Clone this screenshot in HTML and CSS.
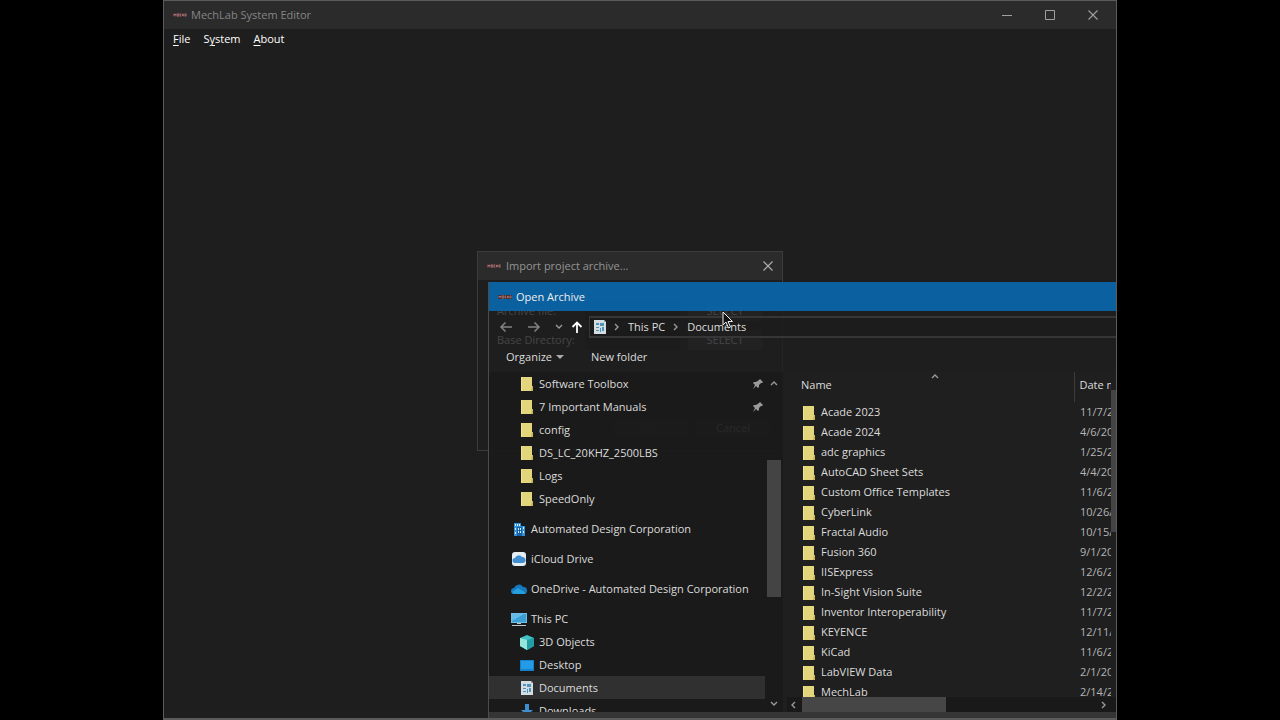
FILE: index.html
```html
<!DOCTYPE html>
<html lang="en">
<head>
<meta charset="utf-8">
<title>MechLab System Editor</title>
<link rel="stylesheet" href="styles.css">
</head>
<body>
<svg class="defs" aria-hidden="true">
  <defs>
    <symbol id="folder" viewBox="0 0 14 16"><path d="M1 1h11v9h1v5H1z" fill="#e3d57b"/><path d="M1 1h1v14H1z" fill="#f0e49a"/><path d="M11 15l1-5h1v5z" fill="#c9b654"/></symbol>
    <symbol id="logo" viewBox="0 0 14 6"><path d="M0 1h14v4H0z" fill="#4a3032"/><path d="M1 4V2l1 1 1-1v2M4 2h2M4 3h2M4 4h2M8 2H7v2h1M9.500 2v2M11 2v2M9.500 3H11M12 2h1v2h-1" fill="none" stroke="#b98789" stroke-width=".7"/></symbol>
    <symbol id="close" viewBox="0 0 12 12"><path d="M1.500 1.500l9 9M10.500 1.500l-9 9" fill="none" stroke="currentColor" stroke-width="1.100"/></symbol>
    <symbol id="doc" viewBox="0 0 12 14"><path d="M0 0h10l2 2v12H0z" fill="#d3dde2"/><path d="M10 0v2h2z" fill="#8e9ba2"/><path d="M2 3h3v2H2zM6 3h4v3H6zM2 7h3v1H2zM2 10h3v1H2zM6 8h1v4H6zM8 7h2v4H8z" fill="#4f93bb"/></symbol>
    <symbol id="up" viewBox="0 0 8 6"><path d="M1 5l3-3 3 3" fill="none" stroke="currentColor" stroke-width="1.400"/></symbol>
    <symbol id="pin" viewBox="0 0 12 12"><path d="M8 1l3 3-1 1-1 0-2 2 0 2-1 1-2-2L1 11l2-4-2-2 1-1h2l3-2z" fill="#9a9a9a"/></symbol>
  </defs>
</svg>
<div class="screen">
<div class="app">
  <header class="titlebar">
    <svg class="logo"><use href="#logo"/></svg>
    <h1 class="title">MechLab System Editor</h1>
    <div class="controls">
      <button class="control" aria-label="Minimize"><svg viewBox="0 0 12 12"><path d="M1 6.500h10" stroke="currentColor"/></svg></button>
      <button class="control" aria-label="Maximize"><svg viewBox="0 0 12 12"><path d="M1.500 1.500h9v9h-9z" fill="none" stroke="currentColor"/></svg></button>
      <button class="control" aria-label="Close"><svg><use href="#close"/></svg></button>
    </div>
  </header>
  <nav class="menubar">
    <button class="menu"><u>F</u>ile</button>
    <button class="menu">S<u>y</u>stem</button>
    <button class="menu"><u>A</u>bout</button>
  </nav>

  <section class="import" aria-label="Import project archive">
    <header class="import-title">
      <svg class="logo"><use href="#logo"/></svg>
      <h2 class="title">Import project archive...</h2>
      <button class="import-close" aria-label="Close"><svg><use href="#close"/></svg></button>
    </header>
    <form class="import-form">
      <div class="field"><label for="archive">Archive file:</label><input id="archive" type="text"><button type="button">SELECT</button></div>
      <div class="field"><label for="base">Base Directory:</label><input id="base" type="text"><button type="button">SELECT</button></div>
      <div class="actions"><button type="button" disabled>OK</button><button type="button">Cancel</button></div>
    </form>
  </section>

  <section class="open" aria-label="Open Archive">
    <header class="open-title"><svg class="logo"><use href="#logo"/></svg><h2 class="title">Open Archive</h2></header>
    <div class="navrow">
      <button class="nav dim" aria-label="Back"><svg viewBox="0 0 14 12"><path d="M13 6H2M6.500 1.500L2 6l4.500 4.500" fill="none" stroke="currentColor" stroke-width="1.500"/></svg></button>
      <button class="nav dim" aria-label="Forward"><svg viewBox="0 0 14 12"><path d="M1 6h11M7.500 1.500L12 6l-4.500 4.500" fill="none" stroke="currentColor" stroke-width="1.500"/></svg></button>
      <button class="nav recent" aria-label="Recent locations"><svg class="caret flip"><use href="#up"/></svg></button>
      <button class="nav parent" aria-label="Up"><svg viewBox="0 0 14 12"><path d="M7 12V1.500M2.500 6L7 1.500 11.500 6" fill="none" stroke="currentColor" stroke-width="1.800"/></svg></button>
      <div class="address">
        <svg class="doc"><use href="#doc"/></svg>
        <svg class="caret right"><use href="#up"/></svg>
        <a href="#pc">This PC</a>
        <svg class="caret right"><use href="#up"/></svg>
        <a href="#documents">Documents</a>
      </div>
    </div>
    <div class="commands">
      <button>Organize <svg class="drop" viewBox="0 0 8 4"><path d="M0 0h8L4 4z" fill="currentColor"/></svg></button>
      <button>New folder</button>
    </div>
    <div class="content">
      <nav class="tree">
        <ul>
          <li class="child"><svg><use href="#folder"/></svg>Software Toolbox<svg class="pin"><use href="#pin"/></svg></li>
          <li class="child"><svg><use href="#folder"/></svg>7 Important Manuals<svg class="pin"><use href="#pin"/></svg></li>
          <li class="child"><svg><use href="#folder"/></svg>config</li>
          <li class="child"><svg><use href="#folder"/></svg>DS_LC_20KHZ_2500LBS</li>
          <li class="child"><svg><use href="#folder"/></svg>Logs</li>
          <li class="child"><svg><use href="#folder"/></svg>SpeedOnly</li>
          <li class="root"><svg viewBox="0 0 16 16"><path d="M3 2h7v3h4v10h-3V6H6v9H3z" fill="#2f8fd8"/><path d="M6 6h5v9H6z" fill="#1660a5"/><path d="M4 3h1v2H4zM6 3h1v2H6zM8 3h1v2H8zM4 7h1v2H4zM4 11h1v2H4zM7 7h1v2H7zM9 7h1v2H9zM7 10h1v2H7zM9 10h1v2H9zM12 6h1v2h-1zM12 10h1v2h-1z" fill="#d5ecfb"/></svg>Automated Design Corporation</li>
          <li class="root"><svg viewBox="0 0 16 16"><rect x="1" y="1" width="14" height="14" rx="3" fill="#e6eef4"/><path d="M4 12a2.500 2.500 0 0 1 0-5 4 4 0 0 1 7-1 3 3 0 0 1 1 6z" fill="#3f8ed0"/></svg>iCloud Drive</li>
          <li class="root"><svg viewBox="0 0 16 16"><path d="M3 13a3 3 0 0 1 0-6 5 5 0 0 1 9-1 3.500 3.500 0 0 1 1 7z" fill="#1679bd"/><path d="M1 11l6-4 8 5q-1 1-2 1H3q-1.500 0-2-2z" fill="#23a0dd"/></svg>OneDrive - Automated Design Corporation</li>
          <li class="root"><svg viewBox="0 0 16 16"><path d="M0 2h16v10H0z" fill="#70bbe5"/><path d="M1 3h14v8H1z" fill="#3b9fd5"/><path d="M1 3h12L1 10z" fill="#64b9e5"/><path d="M6 12h4v1H6zM1 14h14v1H1z" fill="#b8c6ce"/></svg>This PC</li>
          <li class="child"><svg viewBox="0 0 16 16"><path d="M1 4l7-3 7 3v8l-7 4-7-4z" fill="#41c2c4"/><path d="M1 4l7 2v10l-7-4z" fill="#95e5dc"/><path d="M8 6l7-2v8l-7 4z" fill="#229da6"/></svg>3D Objects</li>
          <li class="child"><svg viewBox="0 0 16 16"><path d="M1 3h14v11H1z" fill="#1682cd"/><path d="M2 4h12v8H2z" fill="#249ce5"/></svg>Desktop</li>
          <li class="child selected"><svg viewBox="0 0 16 16"><use href="#doc" x="2" y="1" width="12" height="14"/></svg>Documents</li>
          <li class="child"><svg viewBox="0 0 16 16"><path d="M6 1h4v6h4l-6 6-6-6h4zM2 13h12v1H2z" fill="#3e8fcf"/></svg>Downloads</li>
        </ul>
      </nav>
      <div class="treescroll">
        <svg class="caret"><use href="#up"/></svg>
        <div class="track"><div class="thumb"></div></div>
        <svg class="caret flip"><use href="#up"/></svg>
      </div>
      <div class="files">
        <div class="filemain">
          <div class="viewport">
            <table>
              <thead><tr><th class="name">Name<svg class="caret sort"><use href="#up"/></svg></th><th class="date">Date modified</th></tr></thead>
              <tbody>
                <tr><td><svg><use href="#folder"/></svg>Acade 2023</td><td>11/7/2023</td></tr>
                <tr><td><svg><use href="#folder"/></svg>Acade 2024</td><td>4/6/2023</td></tr>
                <tr><td><svg><use href="#folder"/></svg>adc graphics</td><td>1/25/2023</td></tr>
                <tr><td><svg><use href="#folder"/></svg>AutoCAD Sheet Sets</td><td>4/4/2023</td></tr>
                <tr><td><svg><use href="#folder"/></svg>Custom Office Templates</td><td>11/6/2023</td></tr>
                <tr><td><svg><use href="#folder"/></svg>CyberLink</td><td>10/26/2023</td></tr>
                <tr><td><svg><use href="#folder"/></svg>Fractal Audio</td><td>10/15/2023</td></tr>
                <tr><td><svg><use href="#folder"/></svg>Fusion 360</td><td>9/1/2023</td></tr>
                <tr><td><svg><use href="#folder"/></svg>IISExpress</td><td>12/6/2023</td></tr>
                <tr><td><svg><use href="#folder"/></svg>In-Sight Vision Suite</td><td>12/2/2023</td></tr>
                <tr><td><svg><use href="#folder"/></svg>Inventor Interoperability</td><td>11/7/2023</td></tr>
                <tr><td><svg><use href="#folder"/></svg>KEYENCE</td><td>12/11/2023</td></tr>
                <tr><td><svg><use href="#folder"/></svg>KiCad</td><td>11/6/2023</td></tr>
                <tr><td><svg><use href="#folder"/></svg>LabVIEW Data</td><td>2/1/2023</td></tr>
                <tr><td><svg><use href="#folder"/></svg>MechLab</td><td>2/14/2023</td></tr>
              </tbody>
            </table>
          </div>
          <div class="vscroll"><div class="thumb"></div></div>
        </div>
        <div class="hscroll">
          <svg class="caret left"><use href="#up"/></svg>
          <div class="track"><div class="thumb"></div></div>
          <svg class="caret right"><use href="#up"/></svg>
        </div>
      </div>
    </div>
    <footer class="open-foot"></footer>
  </section>
  <svg class="cursor" viewBox="0 0 12 18"><path d="M1 1v13l3-3 2.500 6 2-1L6 10.500h4.500z" fill="#111" stroke="#eee"/></svg>
</div>
</div>
</body>
</html>
```

FILE: styles.css
```css
* { box-sizing: border-box; }
body {
  margin: 0;
  background: #000;
  color: #dcdcdc;
  font: 11px/20px "Open Sans", "Noto Sans", sans-serif;
}
button, input { font: inherit; color: inherit; border: 0; padding: 0; background: none; }
h1, h2 { margin: 0; font-weight: 400; }
a { color: inherit; text-decoration: none; }
svg { display: block; flex: none; }
.defs { position: absolute; width: 0; height: 0; }
.screen { padding: 0 163px; }
.app {
  position: relative;
  display: flex;
  flex-direction: column;
  height: 100vh;
  overflow: hidden;
  background: #1e1e1e;
  border: 1px solid #5b5b5b;
  border-bottom-width: 2px;
}
.logo { width: 14px; height: 6px; }
.title { font-size: 11px; }

.titlebar {
  display: flex;
  align-items: center;
  gap: 4px;
  height: 28px;
  padding: 0 2px 0 9px;
  background: #2b2b2b;
  color: #858585;
}
.controls { display: flex; margin-left: auto; }
.control { display: grid; place-items: center; width: 43px; height: 28px; color: #a0a0a0; }
.control svg, .import-close svg { width: 12px; height: 12px; }
.menubar { display: flex; gap: 13px; padding: 0 9px; color: #fff; }
.menu u { text-underline-offset: 2px; }

.import {
  position: absolute;
  left: 313px;
  top: 250px;
  width: 306px;
  height: 200px;
  border: 1px solid #3c3c3c;
  background: #1e1e1e;
}
.import-title {
  display: flex;
  align-items: center;
  gap: 5px;
  height: 28px;
  padding: 0 8px 0 9px;
  background: #2b2b2b;
  color: #949494;
}
.import-close { margin-left: auto; color: #b0b0b0; }
.import-form { padding: 16px 12px 12px 19px; }
.field { display: flex; align-items: center; height: 29px; }
.field label { width: 88px; }
.field input { width: 95px; height: 20px; background: #151515; }
.field button, .actions button { width: 74px; height: 20px; background: #333; }
.field button { margin-left: 8px; }
.actions { display: flex; justify-content: flex-end; gap: 8px; padding-top: 64px; }
.actions button:disabled { color: #404040; }

.open {
  position: absolute;
  left: 324px;
  right: 0;
  top: 281px;
  bottom: 0;
  display: flex;
  flex-direction: column;
  border-left: 1px solid #4c4c4c;
  background: rgba(30, 30, 30, .8);
}
.open-title {
  display: flex;
  align-items: center;
  gap: 4px;
  height: 29px;
  padding-left: 9px;
  background: rgba(9, 103, 173, .9);
  color: #eee;
}
.navrow { display: flex; align-items: center; height: 32px; padding-left: 10px; }
.nav { width: 28px; color: #fff; }
.nav svg { width: 14px; height: 12px; }
.nav.dim { color: #828282; }
.nav.recent { width: 15px; color: #828282; }
.nav.parent { width: 19px; }
.caret, .nav .caret { width: 8px; height: 6px; color: #999; }
.flip { transform: rotate(180deg); }
.right { transform: rotate(90deg); }
.left { transform: rotate(-90deg); }
.address {
  flex: 1;
  display: flex;
  align-items: center;
  gap: 7px;
  height: 22px;
  padding-left: 4px;
  border: 2px solid #363636;
  border-width: 2px 0 2px 1px;
  background: rgba(25, 25, 25, .4);
}
.doc { width: 12px; height: 14px; }
.commands { display: flex; gap: 27px; height: 29px; padding-left: 17px; }
.commands button { display: flex; align-items: center; gap: 4px; height: 28px; }
.drop { width: 8px; height: 4px; color: #aaa; }
.content { flex: 1; min-height: 0; display: flex; }
.tree { width: 276px; overflow: hidden; background: rgba(24, 24, 24, .6); }
.tree ul { margin: 0; padding: 0; list-style: none; }
.tree li { display: flex; align-items: center; gap: 4px; height: 23px; padding-left: 30px; }
.tree li svg { width: 16px; height: 16px; }
.tree .root { margin-top: 7px; padding-left: 22px; }
.tree .selected { background: #303030; }
.tree li .pin { width: 12px; height: 12px; margin: 0 1px 0 auto; }
.treescroll {
  display: flex;
  flex-direction: column;
  align-items: center;
  width: 18px;
  padding: 8px 0 5px;
  background: rgba(24, 24, 24, .6);
}
.treescroll .track { flex: 1; padding-top: 74px; }
.treescroll .thumb { width: 14px; height: 137px; background: #444; }
.files { flex: 1; min-width: 0; display: flex; flex-direction: column; padding-left: 4px; background: #1f1f1f; }
.filemain { flex: 1; min-height: 0; display: flex; }
.viewport { flex: 1; min-width: 0; overflow: hidden; padding-left: 14px; }
table { width: 100%; table-layout: fixed; border-collapse: collapse; }
th { position: relative; height: 30px; padding: 0 0 4px; font-weight: 400; text-align: left; }
th, td { overflow: hidden; white-space: nowrap; }
th.date { width: 37px; padding-left: 5px; border-left: 1px solid #3c3c3c; }
td { height: 20px; padding: 0; }
td + td { padding-left: 6px; color: #b5b5b5; }
td svg { display: inline-block; width: 16px; height: 16px; margin-right: 4px; vertical-align: middle; }
.sort { position: absolute; left: 130px; top: 1px; }
.vscroll { width: 5px; padding-top: 18px; }
.vscroll .thumb { height: 142px; background: #444; }
.hscroll { display: flex; align-items: center; gap: 5px; height: 15px; padding: 0 8px 0 2px; background: #191919; }
.hscroll .track { flex: 1; }
.hscroll .thumb { width: 49%; height: 15px; background: #464646; }
.open-foot { height: 6px; background: #353535; }
.cursor { position: absolute; left: 558px; top: 310px; width: 12px; height: 18px; }
```
